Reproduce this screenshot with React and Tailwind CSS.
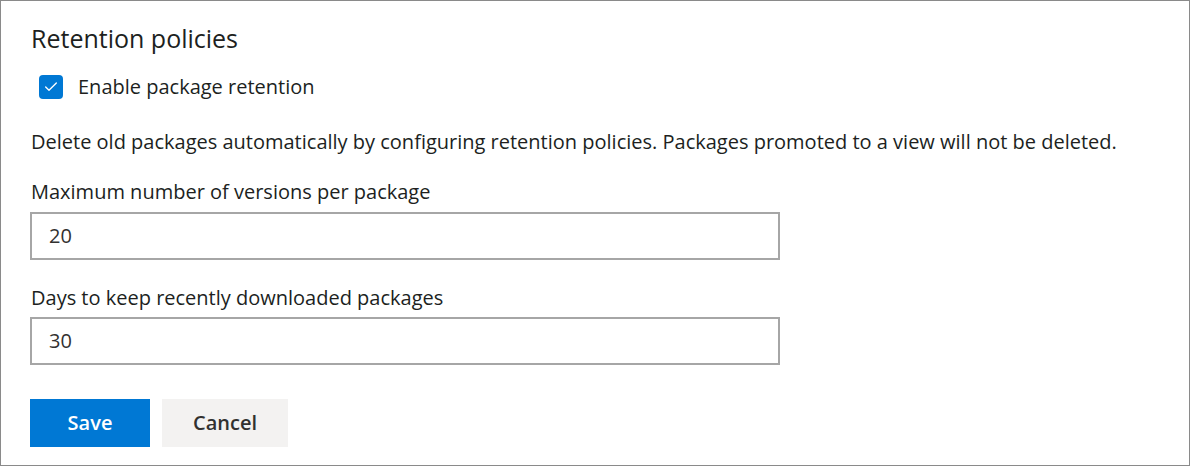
import { Check } from "lucide-react";

export default function App() {
  return (
    <div
      className="w-[1190px] h-[466px] bg-white border border-[#8a8a8a] text-[#201f1e] overflow-hidden"
      style={{ fontFamily: '"Open Sans", "Noto Sans", sans-serif' }}
    >
      <div className="pl-[29px] pt-[21px]">
        <h2 className="text-[25px] leading-[32px] text-[#201f1e] pl-[1px]">Retention policies</h2>

        <label className="flex items-center gap-[15px] mt-[21px] ml-[9px] h-[24px]">
          <span className="w-[24px] h-[24px] rounded-[4px] bg-[#0078d4] flex items-center justify-center">
            <Check size={16} strokeWidth={2} className="text-white" />
          </span>
          <span className="text-[20px] leading-[24px]">Enable package retention</span>
        </label>

        <p className="text-[20px] leading-[28px] mt-[29px] pl-[1px]">
          Delete old packages automatically by configuring retention policies. Packages promoted to a view will not be deleted.
        </p>

        <div className="mt-[22px] text-[20px] leading-[28px] pl-[1px]">Maximum number of versions per package</div>
        <div className="mt-[6px] w-[750px] h-[48px] border-2 border-[#a6a6a6] flex items-center pl-[17px] text-[20px] text-[#323130]">
          20
        </div>

        <div className="mt-[24px] text-[20px] leading-[28px] pl-[1px]">Days to keep recently downloaded packages</div>
        <div className="mt-[5px] w-[750px] h-[48px] border-2 border-[#a6a6a6] flex items-center pl-[17px] text-[20px] text-[#323130]">
          30
        </div>

        <div className="flex gap-[12px] mt-[34px]">
          <button className="w-[120px] h-[48px] bg-[#0078d4] text-white text-[20px] font-semibold">Save</button>
          <button className="w-[126px] h-[48px] bg-[#f3f2f1] text-[#323130] text-[20px] font-semibold">Cancel</button>
        </div>
      </div>
    </div>
  );
}
